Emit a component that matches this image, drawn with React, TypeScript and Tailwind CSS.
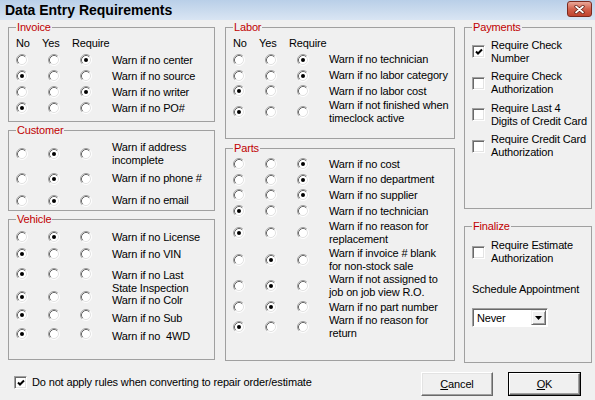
import React from "react";

type Val = 0 | 1 | 2;

interface Row {
  v: Val;
  lines: string[];
  h: string;
  lm?: string;
}

const invoiceRows: Row[] = [
  { v: 2, lines: ["Warn if no center"], h: "h-[16px]" },
  { v: 0, lines: ["Warn if no source"], h: "h-[16px]" },
  { v: 2, lines: ["Warn if no writer"], h: "h-[16px]" },
  { v: 0, lines: ["Warn if no PO#"], h: "h-[16px]" },
];

const customerRows: Row[] = [
  { v: 1, lines: ["Warn if address", "incomplete"], h: "h-[26px]" },
  { v: 1, lines: ["Warn if no phone #"], h: "h-[23px]" },
  { v: 1, lines: ["Warn if no email"], h: "h-[21px]" },
];

const vehicleRows: Row[] = [
  { v: 1, lines: ["Warn if no License"], h: "h-[16px]" },
  { v: 0, lines: ["Warn if no VIN"], h: "h-[18px]" },
  { v: 0, lines: ["Warn if no Last", "State Inspection"], h: "h-[22px]", lm: "mt-[15px]" },
  { v: 0, lines: ["Warn if no Colr"], h: "h-[24px]", lm: "mt-[6px]" },
  { v: 0, lines: ["Warn if no Sub"], h: "h-[12px]", lm: "mt-[6px]" },
  { v: 0, lines: ["Warn if no  4WD"], h: "h-[26px]", lm: "mt-[4px]" },
];

const laborRows: Row[] = [
  { v: 2, lines: ["Warn if no technician"], h: "h-[15px]" },
  { v: 2, lines: ["Warn if no labor category"], h: "h-[17px]" },
  { v: 0, lines: ["Warn if no labor cost"], h: "h-[14px]" },
  { v: 0, lines: ["Warn if not finished when", "timeclock active"], h: "h-[28px]" },
];

const partsRows: Row[] = [
  { v: 2, lines: ["Warn if no cost"], h: "h-[16px]" },
  { v: 2, lines: ["Warn if no department"], h: "h-[15px]" },
  { v: 2, lines: ["Warn if no supplier"], h: "h-[16px]" },
  { v: 0, lines: ["Warn if no technician"], h: "h-[16px]" },
  { v: 0, lines: ["Warn if no reason for", "replacement"], h: "h-[28px]" },
  { v: 1, lines: ["Warn if invoice # blank", "for non-stock sale"], h: "h-[26px]" },
  { v: 1, lines: ["Warn if not assigned to", "job on job view R.O."], h: "h-[26px]" },
  { v: 1, lines: ["Warn if no part number"], h: "h-[16px]" },
  { v: 0, lines: ["Warn if no reason for", "return"], h: "h-[24px]" },
];

const payments = [
  { on: true, lines: ["Require Check", "Number"] },
  { on: false, lines: ["Require Check", "Authorization"] },
  { on: false, lines: ["Require Last 4", "Digits of Credit Card"] },
  { on: false, lines: ["Require Credit Card", "Authorization"] },
];

function Radio({ on }: { on?: boolean }) {
  return (
    <svg width="12" height="12" viewBox="0 0 12 12" className="block shrink-0">
      <circle cx="6" cy="6" r="5" fill="#fff" />
      <path d="M9.89 2.11A5.5 5.5 0 0 0 2.11 9.89" fill="none" stroke="#a0a0a0" />
      <path d="M2.11 9.89A5.5 5.5 0 0 0 9.89 2.11" fill="none" stroke="#ffffff" />
      <path d="M9.18 2.82A4.5 4.5 0 0 0 2.82 9.18" fill="none" stroke="#696969" />
      <path d="M2.82 9.18A4.5 4.5 0 0 0 9.18 2.82" fill="none" stroke="#e3e3e3" />
      {on && <circle cx="6" cy="6" r="2" fill="#000" />}
    </svg>
  );
}

function Check({ on }: { on?: boolean }) {
  return (
    <div className="flex h-[13px] w-[13px] shrink-0 items-center justify-center border border-t-[#a0a0a0] border-l-[#a0a0a0] border-r-white border-b-white bg-white shadow-[inset_1px_1px_0_#696969,inset_-1px_-1px_0_#e3e3e3]">
      {on && (
        <svg width="8" height="8" viewBox="0 0 8 8" className="block">
          <path d="M1 3.5L3 5.5L7 1.5" fill="none" stroke="#000" strokeWidth="2" />
        </svg>
      )}
    </div>
  );
}

function Group({ title, className, children }: { title: string; className: string; children: React.ReactNode }) {
  return (
    <div className={`relative border border-[#a0a0a0] ${className}`}>
      <span className="absolute left-[7px] -top-[7px] bg-[#f0f0f0] px-[1px] leading-[13px] text-[#c00000]">
        {title}
      </span>
      {children}
    </div>
  );
}

function Headings() {
  return (
    <div className="flex h-[13px] pl-[7px]">
      <span className="w-[26px]">No</span>
      <span className="w-[30px]">Yes</span>
      <span>Require</span>
    </div>
  );
}

function RadioRow({ row }: { row: Row }) {
  return (
    <div className={`flex items-center pl-[7px] ${row.h}`}>
      {[0, 1, 2].map((i) => (
        <div key={i} className="w-[32px]">
          <Radio on={row.v === i} />
        </div>
      ))}
      <div className={`whitespace-pre ${row.lm ?? ""}`}>
        {row.lines.map((l) => (
          <div key={l}>{l}</div>
        ))}
      </div>
    </div>
  );
}

function CheckRow({ on, lines, h }: { on?: boolean; lines: string[]; h: string }) {
  return (
    <div className={`flex items-center gap-[6px] pl-[7px] ${h}`}>
      <Check on={on} />
      <div className="whitespace-pre">
        {lines.map((l) => (
          <div key={l}>{l}</div>
        ))}
      </div>
    </div>
  );
}

export default function App() {
  return (
    <div className="flex h-[400px] w-[595px] flex-col overflow-hidden bg-[#f0f0f0] font-['Liberation_Sans',Arial,sans-serif] text-[11px] leading-[13px] tracking-[-0.15px] text-black">
      {/* Title bar */}
      <div className="flex h-[20px] shrink-0 items-start bg-linear-to-b from-[#b9cfe8] to-[#d9e5f3]">
        <span className="pl-[5px] pt-[2px] text-[14px] font-bold leading-[16px] tracking-normal">Data Entry Requirements</span>
        <div className="ml-auto mr-[3px] mt-[1px] flex h-[16px] w-[25px] items-center justify-center rounded-[3px] border border-[#7b2a1f] bg-linear-to-b from-[#e8a89a] via-[#d2624d] to-[#c0432e]">
          <svg width="11" height="9" viewBox="0 0 11 9" className="block">
            <path d="M2 1.5L9 7.5M9 1.5L2 7.5" stroke="#5b1e14" strokeWidth="3.2" strokeLinecap="round" />
            <path d="M2 1.5L9 7.5M9 1.5L2 7.5" stroke="#ffffff" strokeWidth="1.7" strokeLinecap="round" />
          </svg>
        </div>
      </div>

      {/* Groups */}
      <div className="flex pl-[8px] pt-[7px]">
        <div className="flex w-[207px] flex-col">
          <Group title="Invoice" className="h-[95px] pt-[9px]">
            <Headings />
            <div className="mt-[2px]">
              {invoiceRows.map((r) => (
                <RadioRow key={r.lines[0]} row={r} />
              ))}
            </div>
          </Group>
          <Group title="Customer" className="mt-[8px] h-[81px] pt-[10px]">
            {customerRows.map((r) => (
              <RadioRow key={r.lines[0]} row={r} />
            ))}
          </Group>
          <Group title="Vehicle" className="mt-[8px] h-[141px] pt-[9px]">
            {vehicleRows.map((r) => (
              <RadioRow key={r.lines[0]} row={r} />
            ))}
          </Group>
        </div>

        <div className="ml-[10px] flex w-[230px] flex-col">
          <Group title="Labor" className="h-[112px] pt-[9px]">
            <Headings />
            <div className="mt-[2px]">
              {laborRows.map((r) => (
                <RadioRow key={r.lines[0]} row={r} />
              ))}
            </div>
          </Group>
          <Group title="Parts" className="mt-[9px] h-[213px] pt-[7px]">
            {partsRows.map((r, i) => (
              <RadioRow key={i} row={r} />
            ))}
          </Group>
        </div>

        <div className="ml-[9px] flex w-[128px] flex-col">
          <Group title="Payments" className="h-[182px] pt-[8px]">
            {payments.map((p, i) => (
              <CheckRow key={i} on={p.on} lines={p.lines} h="h-[31.5px]" />
            ))}
          </Group>
          <Group title="Finalize" className="mt-[17px] h-[137px] pt-[12px]">
            <CheckRow lines={["Require Estimate", "Authorization"]} h="h-[26px]" />
            <div className="mt-[18px] pl-[7px]">Schedule Appointment</div>
            <div className="ml-[7px] mt-[12px] flex h-[19px] w-[76px] border border-t-[#a0a0a0] border-l-[#a0a0a0] border-r-white border-b-white bg-white shadow-[inset_1px_1px_0_#696969]">
              <span className="flex-1 pl-[4px] pt-[2px] leading-[15px]">Never</span>
              <div className="my-[1px] mr-[1px] flex w-[15px] items-center justify-center border border-t-[#f0f0f0] border-l-[#f0f0f0] border-r-[#696969] border-b-[#696969] bg-[#f0f0f0] shadow-[inset_1px_1px_0_#fff,inset_-1px_-1px_0_#a0a0a0]">
                <svg width="7" height="4" viewBox="0 0 7 4" className="block">
                  <path d="M0 0H7L3.5 4Z" fill="#000" />
                </svg>
              </div>
            </div>
          </Group>
        </div>
      </div>

      {/* Bottom bar */}
      <div className="flex items-start pl-[14px] pr-[14px] pt-[9px]">
        <div className="mt-[4px] flex items-center gap-[5px]">
          <Check on />
          <span>Do not apply rules when converting to repair order/estimate</span>
        </div>
        <div className="ml-auto flex gap-[15px]">
          <button className="h-[24px] w-[72px] border border-t-white border-l-white border-r-[#696969] border-b-[#696969] bg-[#f0f0f0] text-[11px] shadow-[inset_-1px_-1px_0_#a0a0a0,inset_1px_1px_0_#e3e3e3]">
            <span className="underline">C</span>ancel
          </button>
          <div className="h-[24px] w-[73px] border border-black">
            <button className="h-full w-full border border-t-white border-l-white border-r-[#696969] border-b-[#696969] bg-[#f0f0f0] text-[11px] shadow-[inset_-1px_-1px_0_#a0a0a0]">
              <span className="underline">O</span>K
            </button>
          </div>
        </div>
      </div>
    </div>
  );
}
